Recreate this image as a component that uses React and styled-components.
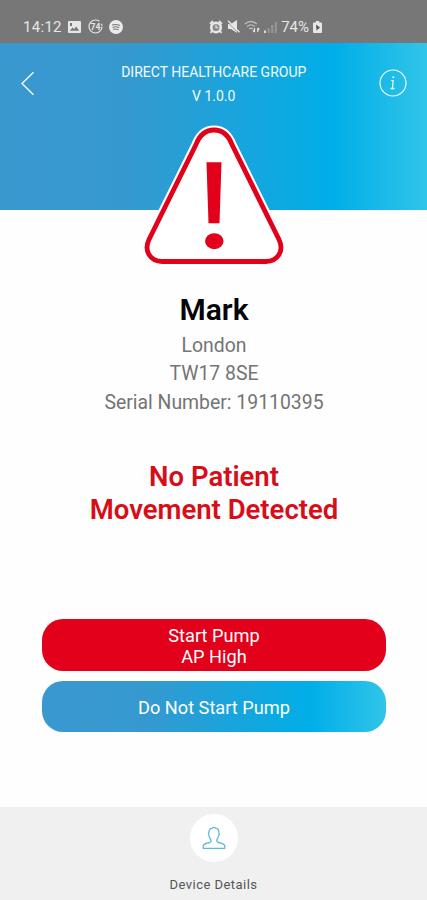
import React from 'react';
import styled, { createGlobalStyle } from 'styled-components';

const RED = '#e2001a';
const BLUE_GRADIENT = 'linear-gradient(90deg, #3a98cf 0%, #3599cf 30%, #00aee8 78%, #31c4e9 100%)';

const GlobalStyle = createGlobalStyle`
    * {
        box-sizing: border-box;
    }

    body {
        margin: 0;
        background: #fff;
        font-family: Roboto, sans-serif;
    }
`;

const Screen = styled.div`
    display: flex;
    flex-direction: column;
    width: 427px;
    height: 900px;
    overflow: hidden;
    background: #fefefe;
`;

const StatusBar = styled.div`
    display: flex;
    justify-content: space-between;
    height: 43px;
    flex-shrink: 0;
    padding: 11px 105px 0 23px;
    background: #777;
    color: #e6e6e6;
    font-size: 15px;
    line-height: 32px;
`;

const StatusGroup = styled.div`
    display: flex;
    align-items: center;
    height: 32px;
    gap: ${({ $gap }) => $gap}px;

    svg {
        display: block;
        margin-top: -1px;
    }
`;

const StatusText = styled.span`
    letter-spacing: ${({ $spacing }) => $spacing || 0}px;
`;

const Header = styled.header`
    display: flex;
    justify-content: space-between;
    align-items: flex-start;
    height: 167px;
    flex-shrink: 0;
    padding: 19px 19.5px 0 20px;
    background: ${BLUE_GRADIENT};
    color: #f2fbff;
`;

const IconButton = styled.button`
    display: flex;
    width: 28px;
    height: 42px;
    align-items: center;
    padding: 0;
    border: 0;
    background: none;
    color: inherit;
`;

const Title = styled.h1`
    margin: -1px 0 0;
    font-size: 14px;
    font-weight: 400;
    line-height: 23.5px;
    text-align: center;
`;

const Content = styled.main`
    display: flex;
    flex-direction: column;
    align-items: center;
    flex: 1;
    text-align: center;
`;

const Warning = styled.svg`
    display: block;
    flex-shrink: 0;
    margin-top: -90px;
`;

const Name = styled.h2`
    margin: 19px 0 0;
    padding-left: 1px;
    color: #050505;
    font-size: 30px;
    font-weight: 600;
    line-height: 41px;
`;

const Details = styled.div`
    color: #747474;
    font-size: 19.4px;
    line-height: 28.4px;
    padding: 2px 0 0 1px;
`;

const Message = styled.p`
    margin: 43px 0 0;
    padding-left: 1px;
    color: #d70d18;
    font-size: 27.5px;
    font-weight: 600;
    line-height: 33px;
`;

const Actions = styled.div`
    display: flex;
    flex-direction: column;
    gap: 10px;
    width: 344px;
    margin-top: 92.8px;
`;

const Action = styled.button`
    width: 100%;
    height: 51.6px;
    padding: 2px 0 0 1px;
    border: 0;
    border-radius: 21px;
    background: ${({ $danger }) => ($danger ? RED : BLUE_GRADIENT)};
    color: #fff;
    font-family: inherit;
    font-size: 18.2px;
    line-height: 21px;
`;

const TabBar = styled.footer`
    display: flex;
    flex-direction: column;
    align-items: center;
    height: 93px;
    flex-shrink: 0;
    padding-top: 7px;
    background: #f0f0f0;
    color: #555;
    font-size: 13px;
    letter-spacing: 0.45px;
`;

const TabIcon = styled.div`
    display: flex;
    align-items: center;
    justify-content: center;
    width: 48px;
    height: 48px;
    margin-bottom: 15px;
    border-radius: 50%;
    background: #fff;
`;

const PictureIcon = () => (
    <svg width="13" height="12" viewBox="0 0 13 12">
        <path fill="#e6e6e6" fillRule="evenodd" d="M1 0h11a1 1 0 0 1 1 1v10a1 1 0 0 1-1 1H1a1 1 0 0 1-1-1V1a1 1 0 0 1 1-1Zm.8 9.8h9.4L8.3 5.4 6.2 8 4.5 6.4 1.8 9.8ZM2 2v3h2V2H2Z" />
    </svg>
);

const BadgeIcon = () => (
    <svg width="15" height="15" viewBox="0 0 15 15">
        <circle cx="7.5" cy="7.5" r="6.5" fill="none" stroke="#e6e6e6" strokeWidth="1.2" strokeDasharray="34 3 2 2" />
        <text x="7.5" y="10.6" fill="#e6e6e6" fontSize="8.6" fontWeight="700" textAnchor="middle">74</text>
    </svg>
);

const MusicIcon = () => (
    <svg width="14" height="14" viewBox="0 0 14 14">
        <circle cx="7" cy="7" r="7" fill="#ebebeb" />
        <path d="M3 5q4-1.2 8 .5M3.5 7.2q3.5-1 6.8.5M4 9.3q3-.7 5.5.4" fill="none" stroke="#777" strokeWidth="1.1" />
    </svg>
);

const AlarmIcon = () => (
    <svg width="14" height="14" viewBox="0 0 14 14">
        <circle cx="7" cy="7.5" r="4.8" fill="#8b8b8b" stroke="#e6e6e6" strokeWidth="2.6" />
        <path d="M1 4 4 1M13 4l-3-3M3 11l-1.5 2M11 11l1.5 2" stroke="#e6e6e6" strokeWidth="1.8" />
        <path d="M7 4.8v3h2.2" fill="none" stroke="#e6e6e6" strokeWidth="1.1" />
    </svg>
);

const MuteIcon = () => (
    <svg width="13" height="13" viewBox="0 0 13 13">
        <path d="M1 4h3l6-4v13L4 9H1Z" fill="#e6e6e6" />
        <path d="M0 1.5 11.5 13" stroke="#777" strokeWidth=".8" />
        <path d="M1 .8 12.5 12.3" stroke="#e6e6e6" strokeWidth="1.5" />
    </svg>
);

const WifiIcon = () => (
    <svg width="16" height="13" viewBox="0 0 16 13">
        <g fill="none" stroke="#bdbdbd" strokeWidth="1.3">
            <path d="M.8 4q6-5 12 0M3 6.5q4-3.3 7.7 0M5.2 9q1.8-1.5 3.5 0" />
        </g>
        <path d="M10.5 12V8m-1.5 2.5 1.5 1.5M13.8 8v4m0-4 1.5 1.6" fill="none" stroke="#e6e6e6" strokeWidth="1.2" />
    </svg>
);

const SignalIcon = () => (
    <svg width="13" height="12" viewBox="0 0 13 12">
        <path d="M0 9.5h2V12H0z" fill="#d8d8d8" />
        <path d="M3.6 7h2v5h-2zM7.2 4h2v8h-2zM10.8 1h2v11h-2z" fill="#989898" />
    </svg>
);

const BatteryIcon = () => (
    <svg width="9" height="12" viewBox="0 0 9 12">
        <path d="M2.8 0h3.4v1.5H8a1 1 0 0 1 1 1V11a1 1 0 0 1-1 1H1a1 1 0 0 1-1-1V2.5a1 1 0 0 1 1-1h1.8z" fill="#e6e6e6" />
        <path d="m3 3.5 4 3-3.5 3z" fill="#555" />
    </svg>
);

const BackIcon = () => (
    <svg width="15" height="25" viewBox="0 0 15 25">
        <path d="M13.5 1.3 2 12.5l11.5 11.2" fill="none" stroke="currentColor" strokeWidth="1.4" />
    </svg>
);

const InfoIcon = () => (
    <svg width="28" height="28" viewBox="0 0 28 28">
        <g fill="none" stroke="currentColor" strokeWidth="1.2">
            <circle cx="14" cy="14" r="13" />
            <path d="M12.2 11.5h2L13.4 20M11.7 18.7q1 2.4 3.8 .3" />
        </g>
        <circle cx="14.3" cy="8.2" r="1" fill="currentColor" />
    </svg>
);

const PersonIcon = () => (
    <svg width="24" height="24" viewBox="0 0 24 24">
        <path
            d="M1.2 22.3V20C1.5 18 3 17.3 7.8 16.5C9.2 16 9.2 15 8.7 13.5C7.6 12 7.2 11 7 9.5C6 8.5 6.5 7.2 7 6.5C6.7 3.5 8.5 2.2 10.5 2.2C11.2 1 12.8 1 13.5 2.2C15.8 2.2 17.2 4 16.8 6.5C17.5 7.5 17.5 8.5 16.7 9.5C16.5 11 16 12.3 15 13.5C14.6 15 14.8 16 16.2 16.5C20.5 17.3 22.5 18 22.8 20V22.3Z"
            fill="none"
            stroke="#5bbbd9"
            strokeWidth="1.3"
            strokeLinejoin="round"
        />
    </svg>
);

const TRIANGLE = 'M53.5 24.5C57 15.5 62.5 10 71.5 10S86 15.5 89.5 24.5L136.5 119.5C142 131 135 141.5 123.5 141.5H19.5C8 141.5 1 131 6.5 119.5Z';

const WarningSign = () => (
    <Warning width="147" height="150" viewBox="-2.5 0 147 150">
        <path d={TRIANGLE} fill="#fff" stroke="#fff" strokeWidth="9" />
        <path d={TRIANGLE} fill="none" stroke={RED} strokeWidth="4.8" />
        <path d="M64 42.2H79L77 103.2H66Z" fill={RED} />
        <ellipse cx="71.8" cy="121.2" rx="9.2" ry="8" fill={RED} />
    </Warning>
);

export default function App() {
    return (
        <>
            <GlobalStyle />
            <Screen>
                <StatusBar>
                    <StatusGroup $gap={6.5}>
                        <StatusText $spacing={0.3}>14:12</StatusText>
                        <PictureIcon />
                        <BadgeIcon />
                        <MusicIcon />
                    </StatusGroup>
                    <StatusGroup $gap={4}>
                        <AlarmIcon />
                        <MuteIcon />
                        <WifiIcon />
                        <SignalIcon />
                        <StatusText>74%</StatusText>
                        <BatteryIcon />
                    </StatusGroup>
                </StatusBar>

                <Header>
                    <IconButton aria-label="Back">
                        <BackIcon />
                    </IconButton>
                    <Title>
                        DIRECT HEALTHCARE GROUP
                        <br />
                        V 1.0.0
                    </Title>
                    <IconButton aria-label="Information">
                        <InfoIcon />
                    </IconButton>
                </Header>

                <Content>
                    <WarningSign />
                    <Name>Mark</Name>
                    <Details>
                        London
                        <br />
                        TW17 8SE
                        <br />
                        Serial Number: 19110395
                    </Details>
                    <Message>
                        No Patient
                        <br />
                        Movement Detected
                    </Message>
                    <Actions>
                        <Action $danger>
                            Start Pump
                            <br />
                            AP High
                        </Action>
                        <Action>Do Not Start Pump</Action>
                    </Actions>
                </Content>

                <TabBar>
                    <TabIcon>
                        <PersonIcon />
                    </TabIcon>
                    Device Details
                </TabBar>
            </Screen>
        </>
    );
}
